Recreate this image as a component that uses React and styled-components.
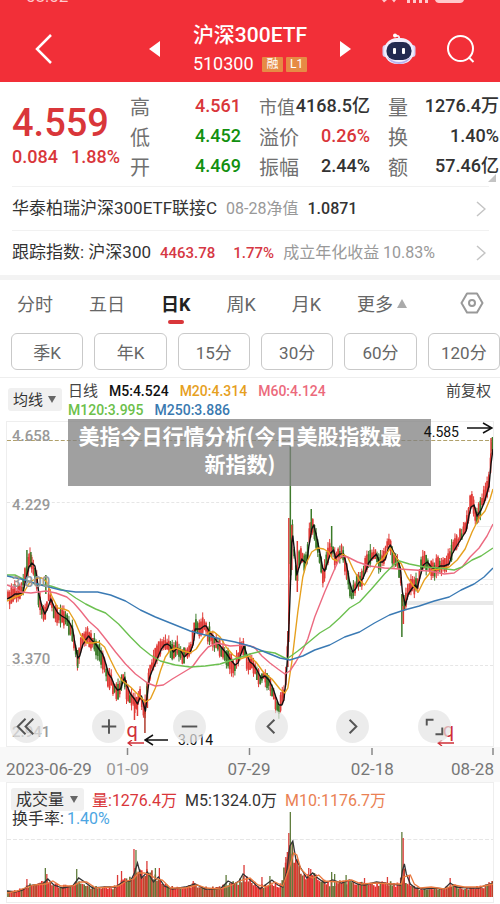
import styled, { createGlobalStyle } from "styled-components";

const RED = "#d9363a";
const GREEN = "#12900f";

const MA5 =
  "6,597 10,595 14,592 18,592 22,591 25,577 28,565 31,561 34,564 36,575 38,592 41,604 44,612 47,606 50,597 53,604 57,611 61,614 66,617 69,621 72,627 74,640 77,656 79,654 82,643 85,638 88,634 91,638 95,642 99,648 102,652 105,661 108,672 111,676 114,684 117,688 120,687 123,678 124,676 127,685 130,692 134,697 137,702 139,697 141,694 143,702 145,709 147,692 149,676 152,668 155,661 158,654 161,647 164,643 167,642 170,644 173,650 177,646 180,648 184,655 187,652 190,650 193,642 195,627 200,627 204,624 206,624 210,631 214,635 217,640 221,645 226,651 230,657 235,663 238,661 241,652 244,644 247,653 250,660 253,662 257,668 261,676 265,674 269,678 273,686 276,695 279,703 282,703 284,698 286,680 288,650 290,600 292,540 293,534 295,552 297,573 299,566 302,557 305,560 307,562 309,545 312,527 314,523 317,535 320,550 323,566 325,569 328,560 331,551 334,548 336,556 340,552 344,552 347,563 350,580 353,590 356,587 359,581 363,577 366,570 369,561 373,556 377,552 380,560 383,560 386,557 389,546 391,543 395,552 398,557 401,566 403,590 406,603 409,592 413,586 416,583 418,586 421,574 424,563 428,560 432,565 436,568 441,564 445,564 450,562 453,552 457,545 462,537 467,529 470,513 472,505 475,503 478,514 482,508 485,501 488,491 490,484 492,462 494,447";
const MA20 =
  "6,599 14,595 22,592 29,580 36,576 41,576 46,580 51,594 57,606 63,607 68,609 74,619 80,633 86,641 92,641 98,640 104,645 110,658 116,670 121,678 130,685 138,693 145,700 150,697 155,686 160,669 165,655 170,648 176,646 183,649 190,651 196,647 203,636 209,630 214,630 220,635 226,645 233,653 240,657 249,654 256,660 264,671 272,677 280,687 285,691 288,686 292,660 298,610 303,575 307,560 312,550 318,546 324,547 329,550 333,557 338,559 343,552 348,555 354,568 360,578 365,583 371,573 377,562 384,556 391,546 397,556 402,562 408,575 414,584 419,590 425,578 433,568 440,567 450,565 458,558 466,547 473,530 480,516 486,509 491,497 494,487";
const MA60 =
  "6,583 14,586 20,590 30,591 45,589 55,591 66,595 73,601 80,609 88,619 97,627 105,637 115,650 125,662 135,672 147,681 155,684 163,683 172,677 182,671 192,665 200,654 208,645 217,641 230,644 245,643 254,645 262,654 270,661 278,667 285,672 290,669 296,660 303,648 308,637 315,615 325,590 335,567 341,554 348,555 358,560 370,564 385,566 400,567 415,568 430,569 445,572 455,571 463,565 471,555 480,546 488,534 494,522";
const MA120 =
  "6,573 14,573 22,577 35,582 50,584 65,589 75,596 85,602 95,607 105,611 118,622 130,635 140,645 150,653 160,659 175,663 190,665 205,664 220,662 235,657 250,652 262,649 275,651 287,657 298,649 308,641 320,631 330,625 340,616 350,606 360,600 372,587 385,572 395,562 400,559 410,562 425,565 440,566 455,568 463,565 473,558 482,554 494,546";
const MA250 =
  "6,574 20,577 40,583 60,588 75,590 97,590 110,593 125,599 140,608 155,615 170,621 190,629 205,633 220,637 235,640 250,644 265,650 280,656 290,658 303,654 315,648 330,643 345,635 360,630 375,621 390,613 405,608 420,604 435,599 450,595 462,588 475,582 485,575 494,566";

// average bar height along the volume chart
const VOLUME =
  "6,5 16,6 24,9 30,12 40,13 47,16 54,12 60,10 72,12 79,16 88,10 100,9 112,9 118,14 124,16 130,17 134,24 138,27 144,24 150,24 158,18 168,10 180,9 195,12 205,9 222,10 230,13 238,15 245,19 252,15 260,10 272,14 280,11 284,26 288,40 291,50 295,38 300,28 308,19 315,24 322,16 330,13 345,15 360,13 370,12 385,14 400,12 404,28 407,13 412,14 416,8 430,8 445,9 452,12 460,9 475,9 485,10 494,14";
const VOL_M5 =
  "6,890 14,891 22,889 27,885 33,884 42,883 47,878 53,884 62,887 72,885 78,877 84,881 92,887 105,886 115,886 122,881 130,880 134,872 137,862 141,877 147,871 153,881 158,876 164,885 172,888 185,886 195,883 205,888 220,888 228,880 234,883 239,880 243,873 249,878 254,882 260,888 272,879 278,884 283,886 287,870 290,845 293,840 296,858 301,867 307,877 313,872 318,877 325,882 333,879 342,882 350,879 358,883 365,884 377,881 390,883 401,884 403,870 405,863 407,873 411,883 416,887 425,888 435,887 445,888 451,882 457,886 470,887 480,887 487,884 494,882";
const VOL_M10 =
  "6,892 16,890 24,887 33,884 45,883 52,880 60,885 72,885 80,881 86,881 95,887 110,886 118,885 126,880 133,878 138,872 144,872 150,874 156,878 162,879 170,887 185,887 197,884 206,887 220,888 232,884 242,879 250,877 258,884 266,886 275,881 283,885 289,868 294,852 297,854 301,868 307,874 313,877 319,874 325,880 338,881 352,879 362,883 377,882 392,883 402,883 404,876 411,874 415,883 421,887 432,886 445,888 455,884 465,886 480,886 494,883";

const toPoints = (text) => text.split(" ").map((p) => p.split(",").map(Number));

const valueAt = (points, x) => {
  const i = points.findIndex((p) => p[0] >= x);
  if (i <= 0) return points[0][1];
  const [x0, y0] = points[i - 1];
  const [x1, y1] = points[i];
  return y0 + ((y1 - y0) * (x - x0)) / (x1 - x0);
};

const createRandom = (seed) => () => {
  seed = (seed * 16807) % 2147483647;
  return seed / 2147483647;
};

const makeCandles = () => {
  const random = createRandom(77);
  const points = toPoints(MA5);
  const candles = [];
  for (let x = 7; x < 494; x += 1.7) {
    const y = valueAt(points, x);
    const slope = valueAt(points, Math.min(x + 2, 494)) - valueAt(points, Math.max(x - 2, 6));
    const mid = y + Math.max(-6, Math.min(6, slope * 0.6)) + (random() - 0.5) * 5;
    const body = 3 + random() * 5;
    const up = slope < 0 ? random() > 0.15 : random() > 0.45;
    candles.push({
      x,
      top: mid - body,
      bottom: mid + body,
      high: mid - body - random() * 6,
      low: mid + body + random() * 5,
      color: up ? "#e03a36" : "#3a7a28",
    });
  }
  return candles;
};

const SPIKES = [
  { x: 26, y1: 548, y2: 570, color: "#3a7a28" },
  { x: 30, y1: 550, y2: 565, color: "#3a7a28" },
  { x: 45, y1: 573, y2: 592, color: "#3a7a28" },
  { x: 77, y1: 648, y2: 666, color: "#3a7a28" },
  { x: 134, y1: 700, y2: 718, color: "#e03a36" },
  { x: 137, y1: 698, y2: 714, color: "#e03a36" },
  { x: 144.5, y1: 706, y2: 731, color: "#b03a2c" },
  { x: 147, y1: 680, y2: 706, color: "#e03a36" },
  { x: 288, y1: 629, y2: 665, color: "#c22f2b" },
  { x: 289, y1: 516, y2: 640, color: "#e03a36" },
  { x: 290.5, y1: 444, y2: 562, color: "#3f7a2c" },
  { x: 292, y1: 523, y2: 568, color: "#e03a36" },
  { x: 297.5, y1: 539, y2: 590, color: "#e03a36" },
  { x: 311.5, y1: 507, y2: 530, color: "#3a7a28" },
  { x: 332, y1: 524, y2: 545, color: "#3a7a28" },
  { x: 402.5, y1: 592, y2: 635, color: "#3a7a28" },
  { x: 404, y1: 604, y2: 622, color: "#e03a36" },
  { x: 492, y1: 436, y2: 460, color: "#e03a36" },
  { x: 493.5, y1: 435, y2: 452, color: "#3a7a28" },
];

const makeBars = () => {
  const random = createRandom(4242);
  const points = toPoints(VOLUME);
  const bars = [];
  for (let x = 7; x < 495; x += 1.7) {
    const shade = random();
    bars.push({
      x,
      height: valueAt(points, x) * (0.8 + random() * 0.4),
      color: shade > 0.6 ? "#e8312f" : shade > 0.25 ? "#bb452b" : "#6c7236",
    });
  }
  return bars;
};

const VOLUME_SPIKES = [
  [26, 878, 0], [44.5, 867, 1], [46, 873, 0], [76, 868, 1], [117, 874, 0], [121, 870, 0],
  [133.5, 848, 0], [135.5, 849, 1], [146.5, 860, 0], [155, 867, 1], [159, 867, 0],
  [193, 880, 0], [226, 874, 1], [244, 864, 0], [262, 876, 0], [270, 875, 1], [286, 856, 0], [287.5, 851, 0],
  [289, 832, 0], [290.5, 811, 1], [292.5, 842, 1], [297.5, 858, 0], [309, 867, 0], [311, 868, 0], [332, 871, 1],
  [335, 873, 1], [346.5, 874, 1], [365, 877, 0], [388, 876, 0], [402.5, 831, 1], [403.8, 837, 0],
  [410, 874, 0], [451, 877, 0], [490, 881, 0],
];

const candles = makeCandles();
const bars = makeBars();

const STATS = [
  [
    { label: "高", value: "4.561", color: RED },
    { label: "低", value: "4.452", color: GREEN },
    { label: "开", value: "4.469", color: GREEN },
  ],
  [
    { label: "市值", value: "4168.5亿", compact: true },
    { label: "溢价", value: "0.26%", color: RED },
    { label: "振幅", value: "2.44%" },
  ],
  [
    { label: "量", value: "1276.4万" },
    { label: "换", value: "1.40%" },
    { label: "额", value: "57.46亿" },
  ],
];

const TABS = ["分时", "五日", "日K", "周K", "月K"];
const PERIODS = ["季K", "年K", "15分", "30分", "60分", "120分"];
const PRICES = [
  ["4.658", 4],
  ["4.229", 73],
  ["3.800", 150],
  ["3.370", 227],
  ["2.941", 300],
];
const TOOLS = [
  ["最早", "M16 9 8 17l8 8M24 9l-8 8 8 8"],
  ["放大", "M10 17h15M17.500 9.500v15"],
  ["缩小", "M9 17h16"],
  ["向左", "M20 10l-7 7 7 7"],
  ["向右", "M14 10l7 7-7 7"],
  ["全屏", "M9 16V10h7M25 18v7h-7"],
];

export default function App() {
  return (
    <>
      <GlobalStyle />
      <Header>
        <StatusBar>
          <span>08:02</span>
          <svg width="86" height="3" viewBox="0 0 86 3" fill="#ffc9cc">
            <path d="M2 0h5L4 2.500zM12 0h4l-2 2.500zM27 0h3v3h-3zM33 0h3v3h-3zM39 0h3v3h-3zM45 0h3v3h-3zM55 0h29q-1 3-4 3H59q-3 0-4-3z" />
          </svg>
        </StatusBar>
        <NavBar>
          <NavSide>
            <IconButton aria-label="返回">
              <svg width="20" height="30" viewBox="0 0 20 30" fill="none" stroke="#fff" strokeWidth="2.500">
                <path d="M17 1 3 15l14 14" />
              </svg>
            </IconButton>
          </NavSide>
          <NavCenter>
            <IconButton aria-label="上一个">
              <svg width="11" height="16" viewBox="0 0 11 16" fill="#fff"><path d="M11 0v16L0 8z" /></svg>
            </IconButton>
            <TitleBlock>
              <h1>沪深300ETF</h1>
              <p>
                510300
                <span>
                  <Badge>融</Badge>
                  <Badge>L1</Badge>
                </span>
              </p>
            </TitleBlock>
            <IconButton aria-label="下一个">
              <svg width="11" height="16" viewBox="0 0 11 16" fill="#fff"><path d="M0 0v16l11-8z" /></svg>
            </IconButton>
          </NavCenter>
          <NavSide $end>
            <IconButton aria-label="智能助手">
              <svg width="34" height="32" viewBox="0 0 34 32">
                <path d="M17 6q1-4-4-3" fill="none" stroke="#f4e9f6" strokeWidth="2" />
                <circle cx="13" cy="2.500" r="2" fill="#fff" />
                <rect x="0.500" y="12" width="7" height="12" rx="3" fill="#d5d0f4" />
                <rect x="26.500" y="12" width="7" height="12" rx="3" fill="#d5d0f4" />
                <rect x="2" y="5" width="30" height="26" rx="13" fill="#f1eefc" />
                <path d="M5 24q12 10 24 0-4 7-12 7T5 24z" fill="#b9b2ee" />
                <rect x="4.500" y="9" width="25" height="18" rx="8.500" fill="#222a50" />
                <rect x="11" y="15" width="3" height="6" rx="1" fill="#fff" />
                <rect x="20" y="15" width="3" height="6" rx="1" fill="#fff" />
              </svg>
            </IconButton>
            <IconButton aria-label="搜索">
              <svg width="30" height="30" viewBox="0 0 30 30" fill="none" stroke="#fff" strokeWidth="2">
                <circle cx="14.500" cy="14.500" r="12.500" />
                <path d="M22.500 23l5 5" />
              </svg>
            </IconButton>
          </NavSide>
        </NavBar>
      </Header>

      <Quote>
        <Price>
          <strong>4.559</strong>
          <span>0.084</span>
          <span>1.88%</span>
        </Price>
        <Stats>
          {STATS.map((column) => (
            <dl key={column[0].label}>
              {column.map((stat) => (
                <Stat key={stat.label} $color={stat.color} $compact={stat.compact}>
                  <dt>{stat.label}</dt>
                  <dd>{stat.value}</dd>
                </Stat>
              ))}
            </dl>
          ))}
        </Stats>
        <Corner viewBox="0 0 8 8" aria-hidden="true"><path d="M8 0v8H0z" fill="#c4c4c4" /></Corner>
      </Quote>

      <Links>
        <LinkRow href="#fund">
          <LinkText>华泰柏瑞沪深300ETF联接C</LinkText>
          <LinkText $muted>08-28净值</LinkText>
          <LinkText $strong>1.0871</LinkText>
          <Chevron />
        </LinkRow>
        <LinkRow href="#index">
          <LinkText>跟踪指数: 沪深300</LinkText>
          <Change>
            <span>4463.78</span>
            <span>1.77%</span>
          </Change>
          <LinkText $muted>成立年化收益 10.83%</LinkText>
          <Chevron />
        </LinkRow>
      </Links>

      <Tabs>
        {TABS.map((tab) => (
          <Tab key={tab} $active={tab === "日K"}>{tab}</Tab>
        ))}
        <Tab>
          更多
          <svg width="10" height="9" viewBox="0 0 10 9" fill="#aaa"><path d="M5 0l5 9H0z" /></svg>
        </Tab>
        <IconButton aria-label="设置">
          <svg width="24" height="22" viewBox="0 0 24 22" fill="none" stroke="#999" strokeWidth="2">
            <path d="M7 1.500h10L22.500 11 17 20.500H7L1.500 11z" strokeLinejoin="round" />
            <circle cx="12" cy="11" r="3" />
          </svg>
        </IconButton>
      </Tabs>

      <Periods>
        {PERIODS.map((period) => (
          <button key={period}>{period}</button>
        ))}
      </Periods>

      <Legend>
        <Picker>
          <select aria-label="主图指标"><option>均线</option></select>
          <Caret />
        </Picker>
        <LegendItems>
          <div>
            <LegendItem $label>日线</LegendItem>
            <LegendItem>M5:4.524</LegendItem>
            <LegendItem $color="#e6a01e">M20:4.314</LegendItem>
            <LegendItem $color="#ec6a7c">M60:4.124</LegendItem>
          </div>
          <div>
            <LegendItem $color="#6cc04a">M120:3.995</LegendItem>
            <LegendItem $color="#3a7ab0">M250:3.886</LegendItem>
          </div>
        </LegendItems>
        <LegendItem $label>前复权</LegendItem>
      </Legend>

      <Chart>
        <svg viewBox="6 420 488 324" height="324" preserveAspectRatio="none" fill="none">
          <g stroke="#e6e6e6" strokeDasharray="3 2">
            <path d="M6 500.500h488M6 582.500h488M6 663.500h488" />
          </g>
          <path d="M6 438.500h488" stroke="#b0a069" strokeDasharray="4 2" />
          <path d="M428 577.500h66M478 524.500h16" stroke="#eee" />
          <path d="M406 601h88" stroke="#e8e8e8" strokeWidth="4" />
          {candles.map((c) => (
            <g key={c.x} stroke={c.color}>
              <path d={`M${c.x} ${c.high}V${c.low}`} strokeWidth="1" />
              <path d={`M${c.x} ${c.top}V${c.bottom}`} strokeWidth="1.700" />
            </g>
          ))}
          {SPIKES.map((s) => (
            <path key={s.x} d={`M${s.x} ${s.y1}V${s.y2}`} stroke={s.color} strokeWidth="1.500" />
          ))}
          <g strokeWidth="1.400" strokeLinejoin="round">
            <polyline points={MA5} stroke="#111" />
            <polyline points={MA20} stroke="#e6a01e" />
            <polyline points={MA60} stroke="#ec6a80" />
            <polyline points={MA120} stroke="#6cc050" />
            <polyline points={MA250} stroke="#3a7ab4" />
          </g>
        </svg>
        {PRICES.map(([price, top]) => (
          <AxisPrice key={price} style={{ top }}>{price}</AxisPrice>
        ))}
        <Banner>美指今日行情分析(今日美股指数最新指数)</Banner>
        <HighMark>
          4.585
          <svg width="26" height="12" viewBox="0 0 26 12" fill="none" stroke="#111" strokeWidth="1.500">
            <path d="M0 6h24M16 1l9 5-9 5" />
          </svg>
        </HighMark>
        <LowMark>
          <svg width="24" height="12" viewBox="0 0 24 12" fill="none" stroke="#111" strokeWidth="1.500">
            <path d="M24 6H1M9 1L1 6l8 5" />
          </svg>
          3.014
        </LowMark>
        <Flag $left="24.600%">q<FlagArrow /></Flag>
        <Flag $left="88.500%" $end>q<FlagArrow /></Flag>
        <Tools>
          {TOOLS.map(([name, path]) => (
            <button key={name} aria-label={name}>
              <svg width="33" height="33" viewBox="0 0 34 34" fill="none" stroke="#555" strokeWidth="2">
                <path d={path} />
              </svg>
            </button>
          ))}
        </Tools>
      </Chart>

      <TimeAxis>
        <svg viewBox="6 0 488 8" height="8" preserveAspectRatio="none" stroke="#888" strokeWidth="1.500">
          <path d="M127.500 1v7M249.500 1v7M372 1v7M493 1v7" />
        </svg>
        <time>2023-06-29</time>
        <time>01-09</time>
        <time>07-29</time>
        <time>02-18</time>
        <time>08-28</time>
      </TimeAxis>

      <Volume>
        <VolumeRow>
          <Picker $large>
            <select aria-label="副图指标"><option>成交量</option></select>
            <Caret />
          </Picker>
          <VolumeText $color={RED}>量:1276.4万</VolumeText>
          <VolumeText>M5:1324.0万</VolumeText>
          <VolumeText $color="#ea8153">M10:1176.7万</VolumeText>
        </VolumeRow>
        <Turnover>
          换手率:<VolumeText $color="#4ca5e2">1.40%</VolumeText>
        </Turnover>
        <svg viewBox="6 810 488 86" height="86" preserveAspectRatio="none" fill="none">
          <path d="M6 838.500h488" stroke="#e6e6e6" strokeDasharray="4 2" />
          {bars.map((b) => (
            <path key={b.x} d={`M${b.x} 896v${-b.height}`} stroke={b.color} strokeWidth="1.700" />
          ))}
          {VOLUME_SPIKES.map(([x, y, down]) => (
            <path key={x} d={`M${x} 896V${y}`} stroke={down ? "#5f7c3c" : "#dc3a36"} strokeWidth="1.300" />
          ))}
          <polyline points={VOL_M5} stroke="#333" strokeWidth="1.300" />
          <polyline points={VOL_M10} stroke="#ea7a40" strokeWidth="1.300" />
        </svg>
      </Volume>
    </>
  );
}

const Chevron = () => (
  <ChevronIcon viewBox="0 0 10 16" fill="none" stroke="#c4c4c4" strokeWidth="1.500">
    <path d="M1 1l8 7-8 7" />
  </ChevronIcon>
);

const Caret = () => (
  <svg width="8" height="7" viewBox="0 0 8 7" fill="#666" aria-hidden="true">
    <path d="M0 0h8L4 7z" />
  </svg>
);

const FlagArrow = () => (
  <svg width="17" height="6" viewBox="0 0 17 6" fill="none" stroke="#d03038" strokeWidth="1.300">
    <path d="M17 3H1M5 0L1 3l4 3" />
  </svg>
);

const GlobalStyle = createGlobalStyle`
  * {
    box-sizing: border-box;
  }

  body {
    margin: 0;
    background: #fff;
    color: #333;
    font-family: Roboto, "Noto Sans CJK SC", sans-serif;
    font-size: 16px;
    overflow-x: hidden;
  }

  h1, p, dl, dd {
    margin: 0;
  }

  button, select {
    font-family: inherit;
    color: inherit;
    padding: 0;
    border: none;
    background: none;
    cursor: pointer;
  }

  svg {
    display: block;
    flex: none;
  }
`;

const Header = styled.header`
  background: #f22f38;
  color: #fff;
`;

const StatusBar = styled.div`
  display: flex;
  align-items: flex-end;
  justify-content: space-between;
  height: 3px;
  padding: 0 34px 0 26px;
  overflow: hidden;
  color: #ffc9cc;
  font-size: 17px;
  line-height: 13px;
`;

const NavBar = styled.div`
  display: grid;
  grid-template-columns: 1fr 202px 1fr;
  align-items: center;
  height: 79px;
  padding-top: 13px;
`;

const NavSide = styled.div`
  display: flex;
  align-items: center;
  justify-content: ${({ $end }) => ($end ? "flex-end" : "flex-start")};
  gap: 30px;
  padding: ${({ $end }) => ($end ? "0 24px 0 0" : "0 0 0 34px")};
`;

const NavCenter = styled.div`
  display: flex;
  align-items: center;
  justify-content: space-between;
`;

const IconButton = styled.button`
  display: flex;
`;

const TitleBlock = styled.div`
  h1 {
    font-size: 21px;
    font-weight: 500;
    line-height: 30px;
  }

  p {
    display: flex;
    align-items: center;
    justify-content: space-between;
    font-size: 18px;
    line-height: 28px;
  }

  p span {
    display: flex;
    gap: 3px;
  }
`;

const Badge = styled.b`
  width: 21px;
  background: #e68b45;
  border-radius: 1px;
  font-size: 12px;
  font-weight: 400;
  line-height: 15px;
  text-align: center;
`;

const Quote = styled.section`
  position: relative;
  display: flex;
  gap: 10px;
  padding: 9px 1px 5px 12px;
`;

const Price = styled.div`
  display: flex;
  flex-wrap: wrap;
  align-content: flex-start;
  justify-content: space-between;
  width: 108px;
  padding-top: 8px;
  color: ${RED};
  font-size: 18px;
  font-weight: 500;
  line-height: 20px;

  strong {
    width: 100%;
    font-size: 38px;
    font-weight: 500;
    line-height: 48px;
  }
`;

const Stats = styled.div`
  flex: 1;
  display: grid;
  grid-template-columns: repeat(3, 1fr);
  gap: 18px;
`;

const Stat = styled.div`
  display: flex;
  align-items: center;
  justify-content: space-between;
  height: 30px;
  white-space: nowrap;

  dt {
    color: #707070;
    font-size: ${({ $compact }) => ($compact ? 18 : 20)}px;
  }

  dd {
    color: ${({ $color }) => $color || "#333"};
    font-size: 18px;
    font-weight: 500;
    line-height: 20px;
  }
`;

const Corner = styled.svg`
  position: absolute;
  right: 4px;
  bottom: 4px;
  width: 8px;
  height: 8px;
`;

const Links = styled.nav`
  padding-left: 12px;
  border-bottom: 5px solid #f3f3f3;
`;

const LinkRow = styled.a`
  display: flex;
  align-items: baseline;
  gap: 9px;
  margin-right: 11px;
  border-top: 1px solid #f1f1f1;
  color: #333;
  line-height: 43px;
  text-decoration: none;
  white-space: nowrap;
`;

const LinkText = styled.span`
  color: ${({ $muted }) => ($muted ? "#999" : "#333")};
  font-size: ${({ $muted, $strong }) => ($muted || $strong ? 16 : 17)}px;
  font-weight: ${({ $strong }) => ($strong ? 500 : 400)};
`;

const Change = styled.span`
  display: flex;
  gap: 18px;
  color: #d63844;
  font-size: 15px;
  font-weight: 500;
`;

const ChevronIcon = styled.svg`
  align-self: center;
  width: 10px;
  height: 16px;
  margin-left: auto;
  margin-right: 3px;
`;

const Tabs = styled.nav`
  display: flex;
  align-items: center;
  gap: 36px;
  height: 48px;
  padding: 0 16px 2px 17px;

  ${IconButton} {
    margin-left: auto;
  }
`;

const Tab = styled.button`
  position: relative;
  display: flex;
  align-items: center;
  gap: 4px;
  color: ${({ $active }) => ($active ? "#222" : "#666")};
  font-size: 18px;
  font-weight: ${({ $active }) => ($active ? 700 : 400)};
  white-space: nowrap;

  &::after {
    content: "";
    display: ${({ $active }) => ($active ? "block" : "none")};
    position: absolute;
    left: calc(50% - 8px);
    bottom: -8px;
    width: 16px;
    height: 4px;
    border-radius: 2px;
    background: ${RED};
  }
`;

const Periods = styled.div`
  display: flex;
  gap: 11px;
  padding: 5px 0 7px 11px;

  button {
    flex: 1;
    height: 37px;
    border: 1px solid #c9c9c9;
    border-radius: 6px;
    color: #666;
    font-size: 17px;
  }
`;

const Legend = styled.div`
  display: flex;
  align-items: flex-start;
  height: 44px;
  padding: 4px 9px 0 8px;
  border-top: 1px solid #eee;
  line-height: 19px;
`;

const Picker = styled.label`
  display: flex;
  align-items: center;
  gap: ${({ $large }) => ($large ? 5 : 4)}px;
  height: 23px;
  margin-top: ${({ $large }) => ($large ? 0 : 6)}px;
  padding: 0 6px 0 5px;
  border-radius: 3px;
  background: #f0f0f0;

  select {
    appearance: none;
    font-size: ${({ $large }) => ($large ? 16 : 15)}px;
  }
`;

const LegendItems = styled.div`
  flex: 1;
  padding-left: 6px;

  div {
    display: flex;
    gap: 11px;
  }
`;

const LegendItem = styled.span`
  color: ${({ $color, $label }) => $color || ($label ? "#444" : "#111")};
  font-size: ${({ $label }) => ($label ? 15 : 14)}px;
  font-weight: ${({ $label }) => ($label ? 400 : 500)};
`;

const Chart = styled.section`
  position: relative;
  margin: 0 6px;
  border: 1px solid #eee;

  & > svg {
    width: 100%;
  }
`;

const AxisPrice = styled.span`
  position: absolute;
  left: 5px;
  color: #999;
  font-size: 15px;
  font-weight: 500;
  line-height: 20px;
`;

const Banner = styled.div`
  position: absolute;
  top: -3px;
  left: 61px;
  right: 62px;
  padding: 2px 29px 9px 10px;
  background: rgba(128, 128, 128, 0.75);
  color: #fff;
  font-family: "Noto Sans CJK SC", sans-serif;
  font-size: 21px;
  font-weight: 700;
  line-height: 28px;
  text-align: center;
`;

const HighMark = styled.div`
  position: absolute;
  top: 0;
  right: 0;
  display: flex;
  gap: 8px;
  color: #111;
  font-size: 14px;
  line-height: 20px;
`;

const LowMark = styled.div`
  position: absolute;
  left: 137px;
  bottom: -4px;
  display: flex;
  align-items: center;
  gap: 10px;
  color: #111;
  font-size: 14px;
  line-height: 20px;
`;

const Flag = styled.div`
  position: absolute;
  left: ${({ $left }) => $left};
  bottom: 0;
  color: #d03038;
  font-size: 20px;
  line-height: 20px;
  text-align: ${({ $end }) => ($end ? "right" : "left")};
`;

const Tools = styled.div`
  position: absolute;
  left: 3px;
  right: 42px;
  bottom: 3px;
  display: flex;
  justify-content: space-between;

  button {
    border-radius: 50%;
    background: rgba(228, 228, 228, 0.7);
  }
`;

const TimeAxis = styled.div`
  display: grid;
  grid-template-columns: 100fr 121fr 123fr 100fr auto;
  height: 35px;
  padding: 0 6px;
  background: #f8f8f8;
  color: #777;
  font-size: 17px;
  line-height: 20px;

  svg {
    grid-column: 1 / -1;
    width: 100%;
  }

  time:nth-of-type(2) {
    color: #999;
  }
`;

const Volume = styled.section`
  margin: 0 6px;
  padding: 4px 0 5px;
  border: 1px solid #eee;

  & > svg {
    width: 100%;
    margin-top: -16px;
  }
`;

const VolumeRow = styled.div`
  display: flex;
  align-items: center;
  gap: 8px;
  padding-left: 4px;
`;

const VolumeText = styled.span`
  color: ${({ $color }) => $color || "#333"};
  font-size: 16px;
`;

const Turnover = styled.div`
  display: flex;
  gap: 3px;
  padding-left: 5px;
  line-height: 16px;
`;
